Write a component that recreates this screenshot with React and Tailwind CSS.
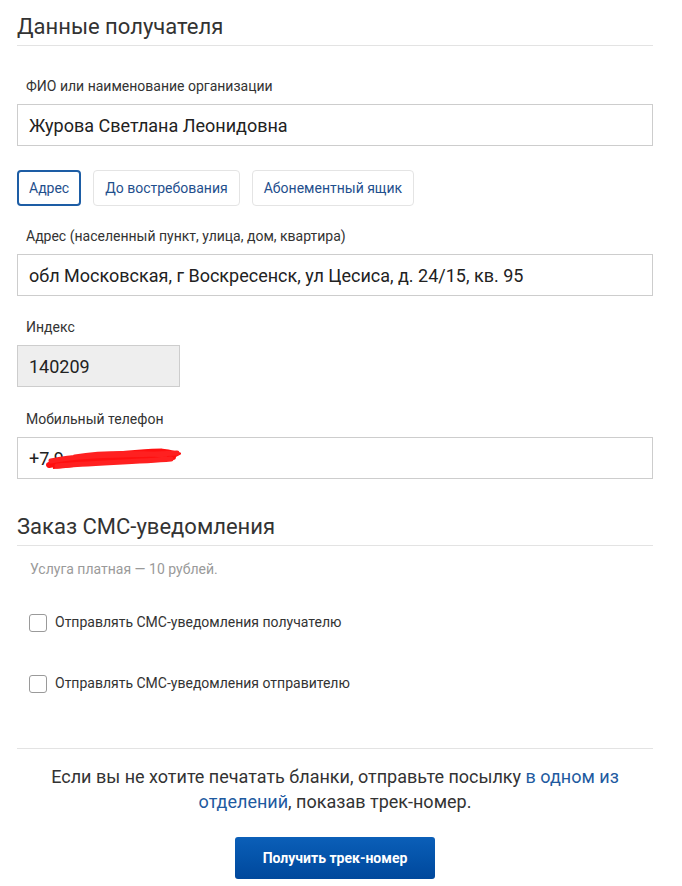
import React from "react";

function Label({ children }) {
  return <div className="pl-[9px] text-[14px] leading-[18px] text-[#333]">{children}</div>;
}

function TextInput({ value, className = "" }) {
  return (
    <div
      className={`flex h-[42px] items-center border border-[#cdcdcd] pl-[11px] text-[18px] text-[#222] ${className}`}
    >
      {value}
    </div>
  );
}

function Checkbox({ label }) {
  return (
    <label className="flex items-center gap-[8px] pl-[12px]">
      <span className="block h-[18px] w-[18px] rounded-[3px] border border-[#9a9a9a] bg-white" />
      <span className="text-[14px] text-[#333]">{label}</span>
    </label>
  );
}

export default function App() {
  const tabs = ["Адрес", "До востребования", "Абонементный ящик"];

  return (
    <div className="min-h-[886px] bg-white font-['Roboto',sans-serif]">
      <div className="ml-[17px] w-[636px]">
        {/* Recipient */}
        <h2 className="border-b border-[#e3e3e3] pt-[13px] pb-[4px] text-[22px] leading-7 text-[#333]">
          Данные получателя
        </h2>

        <div className="mt-[31px]">
          <Label>ФИО или наименование организации</Label>
          <TextInput className="mt-[9px]" value="Журова Светлана Леонидовна" />
        </div>

        <div className="mt-[24px] flex gap-[12px]">
          {tabs.map((t, i) => (
            <button
              key={t}
              className={
                i === 0
                  ? "h-[36px] rounded-[4px] border-2 border-[#1d5da5] px-[10px] text-[14px] text-[#1f4f8d]"
                  : "h-[36px] rounded-[4px] border border-[#e4e4e4] px-[11px] text-[14px] text-[#1f4f8d]"
              }
            >
              {t}
            </button>
          ))}
        </div>

        <div className="mt-[21px]">
          <Label>Адрес (населенный пункт, улица, дом, квартира)</Label>
          <TextInput
            className="mt-[9px]"
            value="обл Московская, г Воскресенск, ул Цесиса, д. 24/15, кв. 95"
          />
        </div>

        <div className="mt-[22px]">
          <Label>Индекс</Label>
          <TextInput className="mt-[9px] w-[163px] bg-[#eeeeee]" value="140209" />
        </div>

        <div className="mt-[23px]">
          <Label>Мобильный телефон</Label>
          <div className="relative mt-[9px]">
            <TextInput value="+7 9" />
            <svg
              className="absolute left-[28px] top-[9px]"
              width="136"
              height="24"
              viewBox="0 0 136 24"
            >
              <path
                d="M4 19 C 30 14, 60 9, 90 7 S 120 5, 130 8 C 120 13, 90 13, 60 15 S 20 20, 8 20 C 40 16, 80 11, 128 11"
                fill="none"
                stroke="#ff1010"
                strokeWidth="6"
                strokeLinecap="round"
              />
              <path
                d="M6 15 C 40 8, 80 10, 132 7 M 12 20 C 50 17, 90 16, 126 13 M 30 11 C 60 6, 90 7, 120 9"
                fill="none"
                stroke="#ff2020"
                strokeWidth="5"
                strokeLinecap="round"
              />
            </svg>
          </div>
        </div>

        {/* SMS */}
        <h2 className="mt-[34px] border-b border-[#e3e3e3] pb-[4px] text-[22px] leading-7 text-[#333]">
          Заказ СМС-уведомления
        </h2>

        <div className="mt-[14px] pl-[13px] text-[14px] leading-[18px] text-[#9a9a9a]">
          Услуга платная — 10 рублей.
        </div>

        <div className="mt-[34px] flex flex-col gap-[40px]">
          <Checkbox label="Отправлять СМС-уведомления получателю" />
          <Checkbox label="Отправлять СМС-уведомления отправителю" />
        </div>

        <div className="mt-[54px] border-t border-[#e3e3e3] pt-[15px] text-center">
          <p className="px-[30px] text-[18px] leading-[25px] text-[#333]">
            Если вы не хотите печатать бланки, отправьте посылку{" "}
            <a className="text-[#1e5aa0]">в одном из отделений</a>, показав трек-номер.
          </p>
          <button className="mt-[23px] h-[42px] w-[200px] rounded-[3px] bg-gradient-to-b from-[#0b5fb8] to-[#00489c] text-[14px] font-bold text-white">
            Получить трек-номер
          </button>
        </div>
      </div>
    </div>
  );
}
